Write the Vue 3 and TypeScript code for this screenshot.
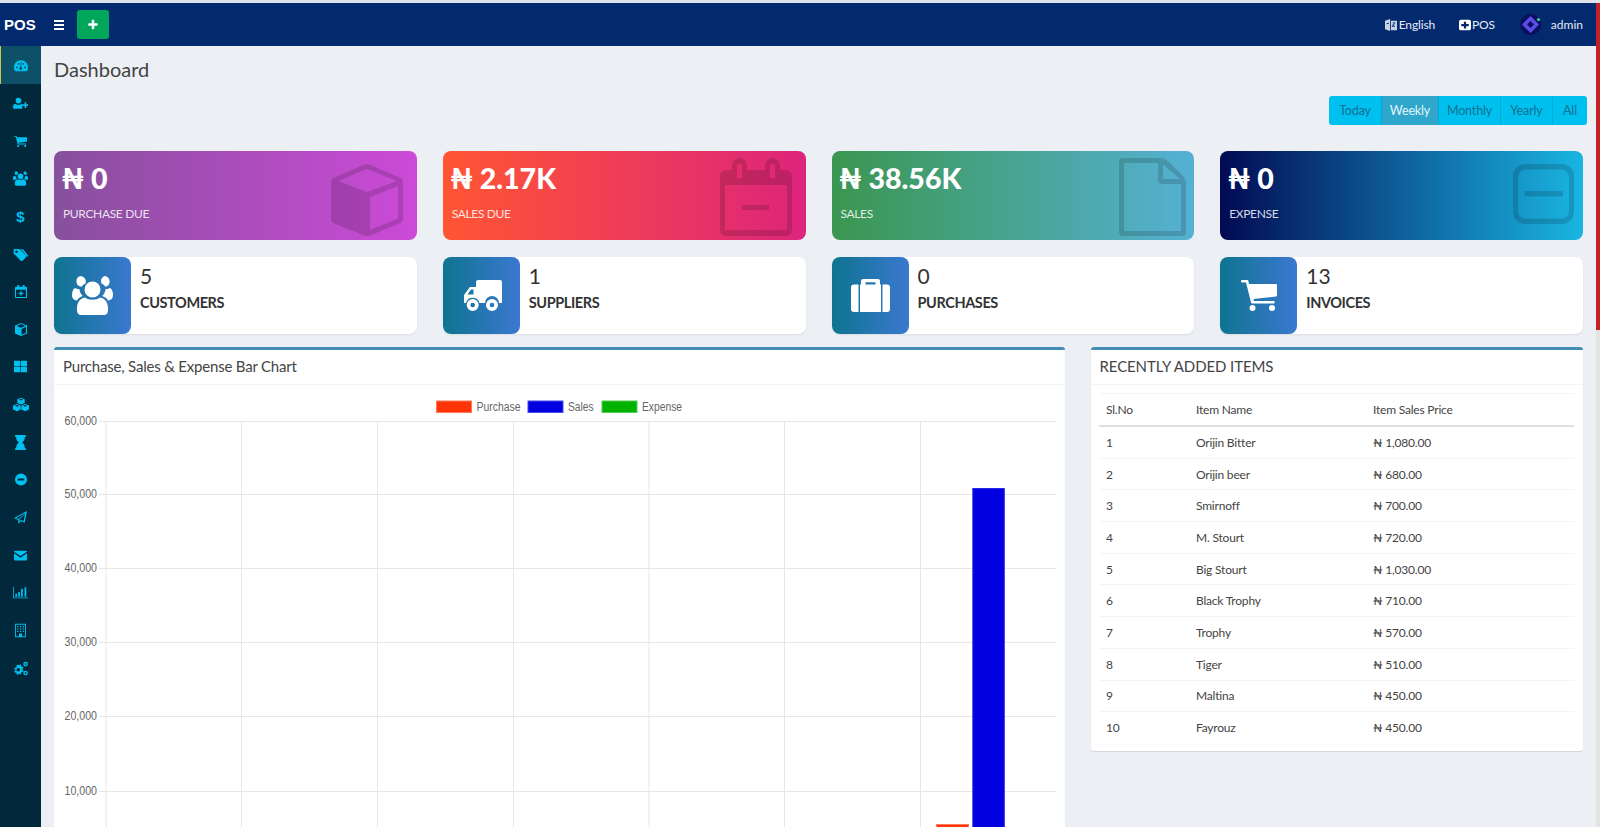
<script setup lang="ts">
const icons: Record<string, { box: string; d: string }> = {
  dashboard: { box: '0 0 24 20', d: 'M12 1C5.4 1 0 6.4 0 13c0 2.3.6 4.4 1.8 6.2.2.3.5.5.9.5h18.6c.4 0 .7-.2.9-.5C23.400 17.400 24 15.300 24 13 24 6.400 18.600 1 12 1zM5 11.500a1.600 1.600 0 1 1 0 3.200 1.600 1.600 0 0 1 0-3.200zM7.800 5.500a1.600 1.600 0 1 1 0 3.200 1.600 1.600 0 0 1 0-3.200zM16.200 5.500a1.600 1.600 0 1 1 0 3.200 1.600 1.600 0 0 1 0-3.200zM19 11.500a1.600 1.600 0 1 1 0 3.200 1.600 1.600 0 0 1 0-3.200zM13.200 4.500l-1 8.200a2.500 2.500 0 1 1-1.600.1l1-8.500z' },
  userplus: { box: '0 0 26 20', d: 'M9.500 0a5 5 0 1 1 0 10 5 5 0 0 1 0-10zM3.500 10.500c1.500 1.300 3.600 2 6 2s4.500-.7 6-2c1.500.4 2.300 1.500 2.700 3H16v5.500H2c-1.300 0-2-.8-2-2.200 0-3 .9-5.500 3.500-6.300zM20 8h3v3.500h3v3h-3V18h-3v-3.500h-3v-3h3z' },
  cart: { box: '0 0 36 31', d: 'M0 1.200A1.200 1.200 0 0 1 1.200 0H6a1.500 1.500 0 0 1 1.500 1.200L8 4h27a1 1 0 0 1 1 1v10.500a1 1 0 0 1-1 1L12.500 19l.5 2h19.500a1.200 1.200 0 0 1 0 2.500H11.500a1.500 1.500 0 0 1-1.500-1.200L5 2.500H1.200A1.200 1.200 0 0 1 0 1.200zM11.500 25a3 3 0 1 1 0 6 3 3 0 0 1 0-6zM31 25a3 3 0 1 1 0 6 3 3 0 0 1 0-6z' },
  users: { box: '0 0 41 39', d: 'M8.500 0a5.500 5.500 0 0 1 5 7.500 9.500 9.500 0 0 0-4 3.300A5.500 5.500 0 0 1 8.500 0zM32.500 0a5.500 5.500 0 0 1 1 10.800 9.500 9.500 0 0 0-4-3.300A5.500 5.500 0 0 1 32.500 0zM20.500 5.500a8 8 0 1 1 0 16 8 8 0 0 1 0-16zM3 12c1.500 1 3.500 1 4.500 1.200.2 2.500 1.300 5 3.300 6.800C7.500 21 5.800 23 5 24.500 2 24 0 22.500 0 19c0-3 1-6 3-7zM38 12c2 1 3 4 3 7 0 3.500-2 5-5 5.500-.8-1.500-2.500-3.500-5.800-4.500 2-1.800 3.100-4.300 3.300-6.800 1-.2 3-.2 4.500-1.200zM13 21.500c2 1.500 4.600 2.200 7.500 2.200s5.500-.7 7.500-2.200c5 1 8 4.500 8 11v2c0 2.500-1.500 4.500-4 4.500H9c-2.500 0-4-2-4-4.500v-2c0-6.500 3-10 8-11z' },
  tags: { box: '0 0 24 20', d: 'M1 1h8.500c.6 0 1.200.3 1.600.7l9.700 9.700c.8.8.8 2 0 2.800l-5.600 5.600c-.8.800-2 .800-2.800 0L2.700 10.100A2.400 2.400 0 0 1 1 8.500zM5.500 3.500a2 2 0 1 0 0 4 2 2 0 0 0 0-4zM12.500 1h2c.6 0 1.200.3 1.600.7l7.200 8.700c.8.800.8 2 0 2.800l-.8.800c0-.7-.2-1.500-.9-2.200l-9.100-10.800z' },
  calplus: { box: '0 0 20 22', d: 'M4 0h3v3h6V0h3v3h2.500C19.400 3 20 3.600 20 4.500v16c0 .9-.6 1.500-1.500 1.500h-17C.6 22 0 21.400 0 20.500v-16C0 3.600.6 3 1.500 3H4zM1.800 8v12.200h16.400V8zM9 10h2v3h3v2h-3v3H9v-3H6v-2h3z' },
  cube: { box: '0 0 20 22', d: 'M10 0l10 4.500v13L10 22 0 17.500v-13zM2.800 5L10 8.200 17.200 5 10 1.800zM11 10v9.800l7.200-3.200V6.800z' },
  grid: { box: '0 0 20 18', d: 'M1 0h7.500a1 1 0 0 1 1 1v6.500a1 1 0 0 1-1 1H1a1 1 0 0 1-1-1V1a1 1 0 0 1 1-1zM11.500 0H19a1 1 0 0 1 1 1v6.500a1 1 0 0 1-1 1h-7.500a1 1 0 0 1-1-1V1a1 1 0 0 1 1-1zM1 9.500h7.500a1 1 0 0 1 1 1V17a1 1 0 0 1-1 1H1a1 1 0 0 1-1-1v-6.500a1 1 0 0 1 1-1zM11.500 9.500H19a1 1 0 0 1 1 1V17a1 1 0 0 1-1 1h-7.500a1 1 0 0 1-1-1v-6.500a1 1 0 0 1 1-1z' },
  cubes: { box: '0 0 26 22', d: 'M13 0l6 2.500v6L13 11 7 8.500v-6zM13 1.800L9.500 3.200 13 4.600l3.500-1.400zM6.500 10l6 2.500v6.500l-6 3-6.500-3v-6.500zM6.500 11.800L3 13.200l3.500 1.400 3.500-1.400zM19.500 10l6.500 2.500v6.500l-6.500 3-6-3v-6.500zM19.500 11.800L16 13.200l3.500 1.400 3.500-1.400z' },
  hourglass: { box: '0 0 16 22', d: 'M0 0h16v2.500h-1.500c0 4-1.700 7-4.200 8.500 2.500 1.500 4.200 4.500 4.200 8.500H16V22H0v-2.500h1.500c0-4 1.700-7 4.200-8.500C3.200 9.500 1.500 6.500 1.500 2.500H0z' },
  minus: { box: '0 0 22 22', d: 'M11 0a11 11 0 1 1 0 22 11 11 0 0 1 0-22zM5 9v4h12V9z' },
  plane: { box: '0 0 22 22', d: 'M22 0l-4 20-6.500-3L8 22l-1.500-7L0 12zM19.500 3L3.800 11.800l3.700 1.700zM18.800 4.500L9 14.200l.3 3.500 2-2.800 5 2.300z' },
  mail: { box: '0 0 24 18', d: 'M1.500 0h21C23.400 0 24 .6 24 1.500v.7L12 10 0 2.200v-.7C0 .6.6 0 1.500 0zM0 5l12 8 12-8v11.500c0 .9-.6 1.500-1.500 1.500h-21C.6 18 0 17.400 0 16.500z' },
  bars: { box: '0 0 26 20', d: 'M0 0h1.300v18.500H26V20H0zM4 12h3v5.500H4zM9 9h3v8.500H9zM14 4h3v13.500h-3zM20 1h3v16.500h-3z' },
  building: { box: '0 0 18 22', d: 'M0 0h18v22H0zM1.500 1.500v19h5v-4.500h5v4.500h5v-19zM3.500 3.500h2v2h-2zM8 3.500h2v2H8zM12.500 3.500h2v2h-2zM3.500 7.500h2v2h-2zM8 7.500h2v2H8zM12.500 7.500h2v2h-2zM3.500 11.500h2v2h-2zM8 11.500h2v2H8zM12.500 11.500h2v2h-2z' },
  cogs: { box: '2 0 23 22', d: 'M9 5l2 .5 1-1.500 2 1.200-.5 1.800 1.500 1.500 1.800-.3.700 2.300-1.700.8v2.200l1.700.8-.7 2.300-1.800-.3L13.500 18l.5 1.800-2 1.200-1-1.500-2 .5-1 1.500-2-1.200L6.500 19 5 17.500l-1.800.3-.7-2.300 1.700-.8v-2.200l-1.700-.8.7-2.300 1.800.3L6.500 8 6 6.200l2-1.200zM9 10a3 3 0 1 0 0 6 3 3 0 0 0 0-6zM21 0a3.800 3.800 0 1 1 0 7.600A3.800 3.800 0 0 1 21 0zM21 2.300a1.500 1.500 0 1 0 0 3 1.500 1.500 0 0 0 0-3zM21 14.500a3.800 3.800 0 1 1 0 7.600 3.800 3.800 0 0 1 0-7.600zM21 16.800a1.500 1.500 0 1 0 0 3 1.500 1.500 0 0 0 0-3z' },
  truck: { box: '0 0 38 31', d: 'M12 2a2 2 0 0 1 2-2h22a2 2 0 0 1 2 2v21h-3a7 7 0 0 0-14 0h-5.500a7 7 0 0 0-13.500 0H0v-8l6-8h6zM3.500 14.500h6v-5H7zM8.700 19a6 6 0 1 1 0 12 6 6 0 0 1 0-12zM8.700 22.700a2.300 2.300 0 1 0 0 4.600 2.300 2.300 0 0 0 0-4.600zM28 19a6 6 0 1 1 0 12 6 6 0 0 1 0-12zM28 22.700a2.300 2.300 0 1 0 0 4.600 2.300 2.300 0 0 0 0-4.600z' },
  case: { box: '0 0 39 33', d: 'M3 5.500h4.500V33H3a3 3 0 0 1-3-3V8.500a3 3 0 0 1 3-3zM31.500 5.500H36a3 3 0 0 1 3 3V30a3 3 0 0 1-3 3h-4.500zM12 0h15a2 2 0 0 1 2 2v3.500h1V33H9V5.500h1V2a2 2 0 0 1 2-2zM14.500 3.300v2.200h10V3.300z' },
  box3d: { box: '0 0 72 72', d: 'M33 .7a8 8 0 0 1 6 0l30 13a5 5 0 0 1 3 4.300v37a5 5 0 0 1-3 4.300l-30 12.300a8 8 0 0 1-6 0L3 59.300A5 5 0 0 1 0 55V18a5 5 0 0 1 3-4.300zM7 17l29 11 30-11L36 5zM39 33v33l28-11.500V22z' },
  calminus: { box: '0 0 72 78', d: 'M6 12h6V8a8 8 0 0 1 8-8h0a8 8 0 0 1 7 8v4h18V8a8 8 0 0 1 8-8h0a8 8 0 0 1 7 8v4h6a6 6 0 0 1 6 6v54a6 6 0 0 1-6 6H6a6 6 0 0 1-6-6V18a6 6 0 0 1 6-6zM17 6v14h5V6zM50 6v14h5V6zM5 27v45h62V27zM22 47v5h27v-5z' },
  file: { box: '0 0 67 78', d: 'M4 0h38q4 0 8 4l14 14q3 3 3 8v48a4 4 0 0 1-4 4H4a4 4 0 0 1-4-4V4a4 4 0 0 1 4-4zM5 5v68h57V26H43a4 4 0 0 1-4-4V5zM44 6.500V21h17z' },
  minsq: { box: '0 0 61 60', d: 'M12 0h37a12 12 0 0 1 12 12v36a12 12 0 0 1-12 12H12A12 12 0 0 1 0 48V12A12 12 0 0 1 12 0zM13 5.500a8 8 0 0 0-8 8v33a8 8 0 0 0 8 8h35a8 8 0 0 0 8-8v-33a8 8 0 0 0-8-8zM11.500 27v5.500H50V27z' },
  plus: { box: '0 0 1792 1792', d: 'M1600 736v192q0 40-28 68t-68 28h-416v416q0 40-28 68t-68 28h-192q-40 0-68-28t-28-68v-416h-416q-40 0-68-28t-28-68v-192q0-40 28-68t68-28h416v-416q0-40 28-68t68-28h192q40 0 68 28t28 68v416h416q40 0 68 28t28 68z' },
  plussq: { box: '0 0 16 16', d: 'M2.500 1h11A2.500 2.500 0 0 1 16 3.500v9a2.500 2.500 0 0 1-2.500 2.500h-11A2.500 2.500 0 0 1 0 12.500v-9A2.500 2.500 0 0 1 2.500 1zM6.500 3.500v3h-3.500v3h3.500v3h3v-3H13v-3H9.500v-3z' },
  lang: { box: '0 0 14 14', d: 'M0 2l6-2v14l-6-2zM7 2h7v11H7zM2 5l2.500-.7v1.200L2 6zM9 4h3v1h-.7c-.1 1.300-.500 2.200-1 2.800l1.400.9-.5.800-1.600-1-1.300 1-.6-.8 1.300-.9L8.300 6.500h1c.1.300.2.500.4.800.2-.5.400-1 .500-2.300H9z' }
};

const sideItems = ['dashboard', 'userplus', 'cart', 'users', 'dollar', 'tags', 'calplus', 'cube', 'grid', 'cubes', 'hourglass', 'minus', 'plane', 'mail', 'bars', 'building', 'cogs'];
const sideWidths: Record<string, number> = { dashboard: 14, userplus: 15, cart: 13, users: 15, tags: 15, calplus: 12, cube: 12, grid: 13, cubes: 16, hourglass: 11, minus: 12, plane: 13, mail: 13, bars: 15, building: 11, cogs: 14 };

const ranges = ['Today', 'Weekly', 'Monthly', 'Yearly', 'All'];

const stats = [
  { value: '₦ 0', label: 'PURCHASE DUE', cls: 'g-purple', icon: 'box3d', w: 72, h: 72, top: 13, right: 14 },
  { value: '₦ 2.17K', label: 'SALES DUE', cls: 'g-red', icon: 'calminus', w: 72, h: 78, top: 7, right: 14 },
  { value: '₦ 38.56K', label: 'SALES', cls: 'g-green', icon: 'file', w: 67, h: 78, top: 7, right: 8 },
  { value: '₦ 0', label: 'EXPENSE', cls: 'g-navy', icon: 'minsq', w: 61, h: 60, top: 13, right: 9 }
];

const counts = [
  { n: 5, label: 'CUSTOMERS', icon: 'users', w: 41, h: 39, nudge: 0 },
  { n: 1, label: 'SUPPLIERS', icon: 'truck', w: 38, h: 31, nudge: 3 },
  { n: 0, label: 'PURCHASES', icon: 'case', w: 39, h: 33, nudge: 0 },
  { n: 13, label: 'INVOICES', icon: 'cart', w: 36, h: 31, nudge: 0 }
];

const items = [
  ['Orijin Bitter', '₦ 1,080.00'],
  ['Orijin beer', '₦ 680.00'],
  ['Smirnoff', '₦ 700.00'],
  ['M. Stourt', '₦ 720.00'],
  ['Big Stourt', '₦ 1,030.00'],
  ['Black Trophy', '₦ 710.00'],
  ['Trophy', '₦ 570.00'],
  ['Tiger', '₦ 510.00'],
  ['Maltina', '₦ 450.00'],
  ['Fayrouz', '₦ 450.00']
];

const gridY = [36, 109, 183, 257, 331, 406];
const gridLabels = ['60,000', '50,000', '40,000', '30,000', '20,000', '10,000'];
const gridX = [52, 187.5, 323.5, 459.5, 595, 730.5, 866.5];
const legend = [
  { label: 'Purchase', x: 382.5, len: 44, color: '#ff3408', edge: '#ff7a5c' },
  { label: 'Sales', x: 474, len: 25.5, color: '#0000e0', edge: '#4a4ae8' },
  { label: 'Expense', x: 548, len: 40, color: '#00b300', edge: '#55cc55' }
];
</script>

<template>
  <div class="page">
    <div class="topline"></div>
    <div class="frame">
      <div class="shell">
        <header class="nav">
          <span class="brand">POS</span>
          <span class="burger"><i></i><i></i><i></i></span>
          <button class="add">
            <svg width="12" height="12" :viewBox="icons.plus.box"><path :d="icons.plus.d" fill="#fff" /></svg>
          </button>
          <div class="nav-right">
            <span class="nav-link first">
              <svg class="lang" width="12" height="12" :viewBox="icons.lang.box"><path :d="icons.lang.d" fill="#c9d3e4" fill-rule="evenodd" /></svg>
              English
            </span>
            <span class="nav-link">
              <svg width="12" height="12" :viewBox="icons.plussq.box"><path :d="icons.plussq.d" fill="#fff" fill-rule="evenodd" /></svg>
              POS
            </span>
            <span class="nav-user">
              <svg width="21" height="21" viewBox="0 0 21 21">
                <circle cx="10.500" cy="10.500" r="10.500" fill="#0a0f5e" />
                <path d="M10.500 2l8.500 8.500-8.500 8.500-8.500-8.500zM10.500 7l-3.500 3.500 3.500 3.500 3.500-3.500z" fill="#5b4be8" fill-rule="evenodd" />
                <circle cx="18.500" cy="5.500" r="1.600" fill="#31d68a" />
              </svg>
              <span class="admin">admin</span>
            </span>
          </div>
        </header>

        <div class="body">
          <aside class="side">
            <a v-for="(s, i) in sideItems" :key="s" class="side-item" :class="{ active: i === 0 }">
              <span v-if="s === 'dollar'" class="dollar">$</span>
              <svg v-else :width="sideWidths[s]" height="15" :viewBox="icons[s].box"><path :d="icons[s].d" fill="#00c0ef" fill-rule="evenodd" /></svg>
            </a>
          </aside>

          <main class="main">
            <h1 class="title">Dashboard</h1>
            <div class="ranges">
              <div class="range-group">
                <span v-for="r in ranges" :key="r" class="range" :class="{ on: r === 'Weekly' }">{{ r }}</span>
              </div>
            </div>

            <section class="grid4 stats">
              <div v-for="s in stats" :key="s.label" class="stat" :class="s.cls">
                <div class="stat-value">{{ s.value }}</div>
                <div class="stat-label">{{ s.label }}</div>
                <svg class="stat-icon" :width="s.w" :height="s.h" :viewBox="icons[s.icon].box" :style="{ top: s.top + 'px', right: s.right + 'px' }">
                  <path :d="icons[s.icon].d" fill="rgba(0,0,0,.15)" fill-rule="evenodd" />
                </svg>
              </div>
            </section>

            <section class="grid4 counts">
              <div v-for="c in counts" :key="c.label" class="count">
                <div class="count-icon" :style="{ paddingLeft: c.nudge + 'px' }">
                  <svg :width="c.w" :height="c.h" :viewBox="icons[c.icon].box"><path :d="icons[c.icon].d" fill="#fff" fill-rule="evenodd" /></svg>
                </div>
                <div class="count-text">
                  <div class="count-n">{{ c.n }}</div>
                  <div class="count-label">{{ c.label }}</div>
                </div>
              </div>
            </section>

            <section class="lower">
              <div class="box chart-box">
                <div class="box-head">Purchase, Sales &amp; Expense Bar Chart</div>
                <svg class="chart" width="1011" height="460" viewBox="0 0 1011 460">
                  <g v-for="l in legend" :key="l.label">
                    <rect :x="l.x" y="16" width="35" height="11.500" :fill="l.color" :stroke="l.edge" stroke-width="1" />
                    <text :x="l.x + 40" y="26" class="tick" :textLength="l.len" lengthAdjust="spacingAndGlyphs">{{ l.label }}</text>
                  </g>
                  <line v-for="y in gridY" :key="y" x1="45" x2="1002" :y1="y + 0.5" :y2="y + 0.5" stroke="#e6e6e6" />
                  <line v-for="x in gridX" :key="x" :x1="x" :x2="x" y1="36" y2="460" stroke="#e6e6e6" />
                  <text v-for="(t, i) in gridLabels" :key="t" x="43" :y="gridY[i] + 4" class="tick" text-anchor="end" textLength="32.500" lengthAdjust="spacingAndGlyphs">{{ t }}</text>
                  <rect x="882.500" y="439.500" width="32" height="30" fill="#ff3408" stroke="#ff7a5c" />
                  <rect x="918.800" y="103.500" width="31.500" height="360" fill="#0000e0" stroke="#2a2ae6" />
                </svg>
              </div>

              <div class="box items-box">
                <div class="box-head upper">RECENTLY ADDED ITEMS</div>
                <div class="items-body">
                  <table class="items">
                    <thead>
                      <tr><th>Sl.No</th><th>Item Name</th><th>Item Sales Price</th></tr>
                    </thead>
                    <tbody>
                      <tr v-for="(it, i) in items" :key="it[0]">
                        <td>{{ i + 1 }}</td><td>{{ it[0] }}</td><td>{{ it[1] }}</td>
                      </tr>
                    </tbody>
                  </table>
                </div>
              </div>
            </section>
          </main>
        </div>
      </div>
      <div class="scroll"><div class="thumb"></div></div>
    </div>
  </div>
</template>

<style>
html, body { margin: 0; padding: 0; overflow: hidden; background: #ecf0f5; }
</style>

<style scoped>
.page { height: 827px; display: flex; flex-direction: column; overflow: hidden; font-family: "Lato", "Noto Sans", sans-serif; color: #333; background: #ecf0f5; }
.topline { height: 3px; flex: none; background: #dfe3ea; }
.frame { flex: 1; display: flex; min-height: 0; }
.shell { flex: 1; min-width: 0; display: flex; flex-direction: column; }
.scroll { width: 4px; flex: none; background: #e3e3e3; }
.thumb { height: 327px; background: #c42126; }

.nav { height: 43px; flex: none; background: #03296f; display: flex; align-items: center; color: #fff; }
.brand { font: 700 15px "Liberation Sans", Arial, sans-serif; margin-left: 4px; width: 50px; }
.burger { width: 10px; display: flex; flex-direction: column; gap: 2px; margin-right: 13px; }
.burger i { display: block; height: 2px; background: #fff; }
.add { width: 32px; height: 29px; border: 0; border-radius: 3px; background: #00a65a; display: flex; align-items: center; justify-content: center; padding: 0; }
.nav-right { margin-left: auto; display: flex; align-items: center; font-size: 12px; letter-spacing: -.15px; color: #e7ecf5; }
.nav-link { display: flex; align-items: center; gap: 1px; margin-right: 25px; }
.nav-link.first { gap: 2px; margin-right: 24px; }
.nav-user { display: flex; align-items: center; gap: 10px; margin-right: 13px; }
.admin { letter-spacing: 0; }

.body { flex: 1; display: flex; min-height: 0; }
.side { width: 41px; flex: none; background: #02283c; display: flex; flex-direction: column; }
.side-item { height: 37.650px; flex: none; display: flex; align-items: center; justify-content: center; box-sizing: border-box; padding-top: 2px; }
.side-item.active { background: #0f5069; border-left: 1px solid #c9c44a; }
.dollar { color: #00c0ef; font: 700 15px "Liberation Sans", Arial, sans-serif; }

.main { flex: 1; min-width: 0; padding: 0 13px; }
.title { margin: 0; padding-top: 9px; height: 37px; font-size: 20px; line-height: 28px; font-weight: 400; color: #444; box-sizing: content-box; }
.ranges { display: flex; justify-content: flex-end; margin: 4px -4px 0 0; }
.range-group { display: flex; height: 29px; border-radius: 3px; overflow: hidden; background: #00c0ef; font-size: 12.500px; letter-spacing: -.15px; color: #11708f; }
.range { display: flex; align-items: center; justify-content: center; border-right: 1px solid #00acd6; box-sizing: border-box; }
.range:nth-child(1) { width: 53px; }
.range:nth-child(2) { width: 57px; }
.range:nth-child(3) { width: 62px; }
.range:nth-child(4) { width: 52px; }
.range:nth-child(5) { width: 34px; border-right: 0; }
.range.on { background: #2fa6cb; color: #e3f6fb; }

.grid4 { display: grid; grid-template-columns: repeat(4, 1fr); column-gap: 26px; }
.stats { margin-top: 26px; }
.stat { position: relative; height: 89px; border-radius: 8px; color: #fff; padding-left: 9px; box-sizing: border-box; overflow: hidden; }
.g-purple { background: linear-gradient(90deg, #87509c, #cc4ad8); }
.g-red { background: linear-gradient(90deg, #ff5533, #dd247c); }
.g-green { background: linear-gradient(90deg, #3b9650, #55b1d4); }
.g-navy { background: linear-gradient(90deg, #020a53, #1ab5e2); }
.stat-value { font-size: 28.500px; font-weight: 900; line-height: 36px; margin: 9px 0 0 -1.500px; }
.stat-label { font-size: 12px; letter-spacing: -.35px; line-height: 18px; margin-top: 9px; color: rgba(255, 255, 255, .85); }
.stat-icon { position: absolute; }

.counts { margin-top: 17px; }
.count { height: 77px; background: #fff; border-radius: 8px; display: flex; box-shadow: 0 1px 2px rgba(0, 0, 0, .08); }
.count-icon { width: 77px; flex: none; border-radius: 8px; background: linear-gradient(90deg, #0e7490, #3b78d0); display: flex; align-items: center; justify-content: center; box-sizing: border-box; }
.count-text { padding-left: 9px; }
.count-n { font-size: 21px; line-height: 26px; margin-top: 6px; color: #333; }
.count-label { font-size: 14.500px; letter-spacing: -.4px; line-height: 20px; font-weight: 700; margin-top: 4px; color: #333; }

.lower { display: grid; grid-template-columns: 1011px 492px; column-gap: 26px; margin-top: 13px; align-items: start; }
.box { background: #fff; border-top: 3px solid #428db5; border-radius: 3px; box-shadow: 0 1px 1px rgba(0, 0, 0, .1); }
.box-head { height: 34px; line-height: 32px; padding-left: 9px; font-size: 15px; letter-spacing: -.2px; color: #444; border-bottom: 1px solid #f4f4f4; box-sizing: content-box; }
.box-head.upper { letter-spacing: -.1px; padding-left: 8.500px; }
.chart { display: block; }
.tick { font: 12px "Liberation Sans", Arial, sans-serif; fill: #666; }

.items-body { padding: 8px 9px 8px 8px; }
.items { width: 100%; border-collapse: collapse; font-size: 12px; letter-spacing: -.2px; color: #444; table-layout: fixed; border-top: 1px solid #f4f4f4; }
.items th { text-align: left; font-weight: 400; height: 31px; padding: 0 7px; border-bottom: 2px solid #e0e0e0; }
.items td { height: 30.700px; padding: 0 7px; border-bottom: 1px solid #f4f4f4; }
.items th:nth-child(1) { width: 76px; }
.items th:nth-child(2) { width: 163px; }
.items tr:last-child td { border-bottom: 0; }
</style>
